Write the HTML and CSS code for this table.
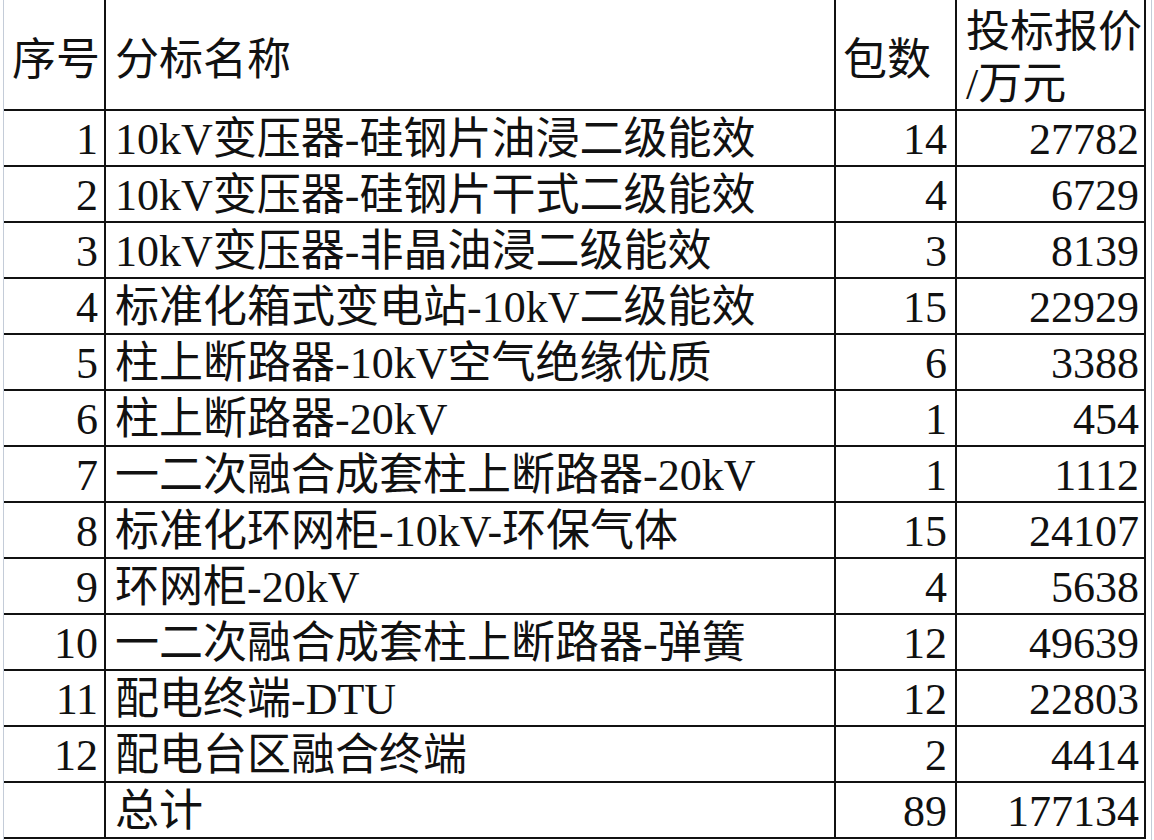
FILE: index.html
```html
<!DOCTYPE html>
<html lang="zh-CN">
<head>
<meta charset="utf-8">
<title>分标报价</title>
<link rel="stylesheet" href="styles.css">
</head>
<body>
<div class="sheet">
  <div class="grid">
    <div class="cell head c1">序号</div>
    <div class="cell head c2">分标名称</div>
    <div class="cell head c3">包数</div>
    <div class="cell head c4 two">投标报价<br>/万元</div>

    <div class="cell num">1</div><div class="cell name">10kV变压器-硅钢片油浸二级能效</div><div class="cell num n3">14</div><div class="cell num n4">27782</div>
    <div class="cell num">2</div><div class="cell name">10kV变压器-硅钢片干式二级能效</div><div class="cell num n3">4</div><div class="cell num n4">6729</div>
    <div class="cell num">3</div><div class="cell name">10kV变压器-非晶油浸二级能效</div><div class="cell num n3">3</div><div class="cell num n4">8139</div>
    <div class="cell num">4</div><div class="cell name">标准化箱式变电站-10kV二级能效</div><div class="cell num n3">15</div><div class="cell num n4">22929</div>
    <div class="cell num">5</div><div class="cell name">柱上断路器-10kV空气绝缘优质</div><div class="cell num n3">6</div><div class="cell num n4">3388</div>
    <div class="cell num">6</div><div class="cell name">柱上断路器-20kV</div><div class="cell num n3">1</div><div class="cell num n4">454</div>
    <div class="cell num">7</div><div class="cell name">一二次融合成套柱上断路器-20kV</div><div class="cell num n3">1</div><div class="cell num n4">1112</div>
    <div class="cell num">8</div><div class="cell name">标准化环网柜-10kV-环保气体</div><div class="cell num n3">15</div><div class="cell num n4">24107</div>
    <div class="cell num">9</div><div class="cell name">环网柜-20kV</div><div class="cell num n3">4</div><div class="cell num n4">5638</div>
    <div class="cell num">10</div><div class="cell name">一二次融合成套柱上断路器-弹簧</div><div class="cell num n3">12</div><div class="cell num n4">49639</div>
    <div class="cell num">11</div><div class="cell name">配电终端-DTU</div><div class="cell num n3">12</div><div class="cell num n4">22803</div>
    <div class="cell num">12</div><div class="cell name">配电台区融合终端</div><div class="cell num n3">2</div><div class="cell num n4">4414</div>
    <div class="cell num"></div><div class="cell name">总计</div><div class="cell num n3">89</div><div class="cell num n4">177134</div>
  </div>
  <div class="spacer"></div>
</div>
</body>
</html>
```
FILE: styles.css
```css
* { box-sizing: border-box; }
html, body { margin: 0; padding: 0; background: #ffffff; }
body {
  font-family: "Liberation Serif", "Noto Sans CJK SC", serif;
  font-weight: 400;
  color: #111;
  width: 1154px;
  height: 840px;
  overflow: hidden;
}
.sheet {
  display: flex;
  margin-left: 3px;
  border-left: 1px solid #c4ccd8;
  height: 840px;
}
.grid {
  display: grid;
  grid-template-columns: 102px 730px 121px 189px;
  grid-template-rows: 111px repeat(13, 56px);
}
.spacer {
  width: 6px;
  border-right: 1px solid #c4ccd8;
}
.cell {
  border-right: 2px solid #111;
  border-bottom: 2px solid #111;
  font-size: 44px;
  line-height: 54px;
  display: flex;
  align-items: center;
  white-space: nowrap;
  padding-top: 4px;
}
.head { padding-left: 8px; padding-top: 12px; }
.head.c2 { padding-left: 9px; }
.head.c3 { padding-left: 7px; }
.head.c4 { padding-left: 9px; padding-top: 8px; line-height: 52px; }
.name { padding-left: 9px; }
.num { justify-content: flex-end; padding-right: 6px; font-size: 44px; }
.n3 { padding-right: 8px; }
.n4 { padding-right: 5px; }
```
